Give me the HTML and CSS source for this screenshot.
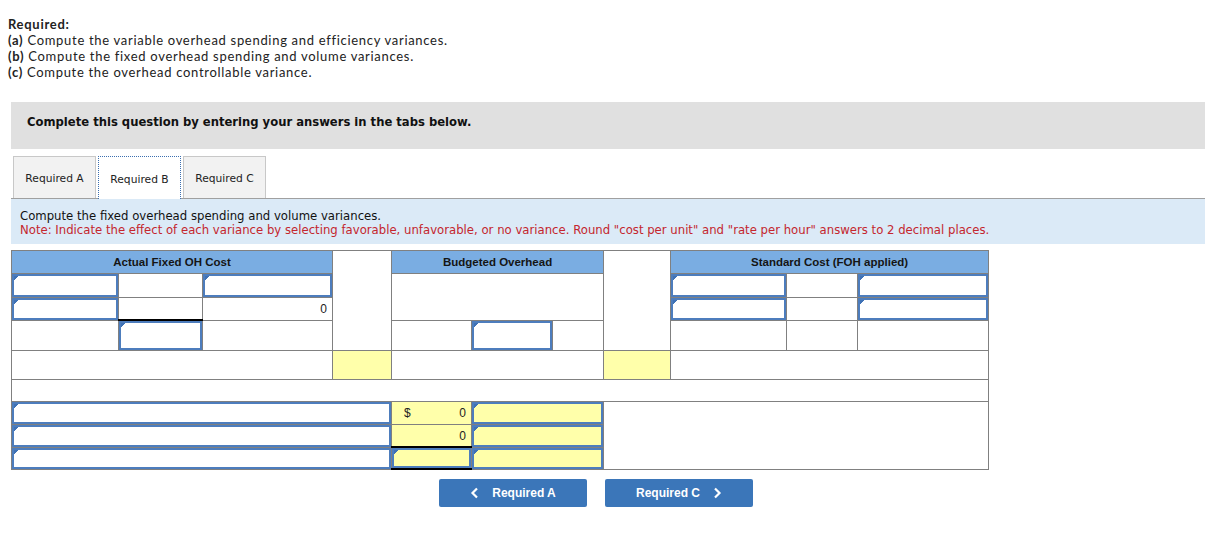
FILE: index.html
```html
<!DOCTYPE html>
<html lang="en">
<head>
    <meta charset="UTF-8">
    <title>Fixed Overhead Variances</title>
    <link rel="stylesheet" href="styles.css">
</head>
<body>
    <div class="page">
        <div class="required">
            <p class="req-title">Required:</p>
            <p><b>(a)</b> Compute the variable overhead spending and efficiency variances.</p>
            <p><b>(b)</b> Compute the fixed overhead spending and volume variances.</p>
            <p><b>(c)</b> Compute the overhead controllable variance.</p>
        </div>

        <div class="question">
            <div class="banner">Complete this question by entering your answers in the tabs below.</div>

            <div class="tabs">
                <div class="tab">Required A</div>
                <div class="tab active">Required B</div>
                <div class="tab">Required C</div>
            </div>

            <div class="instructions">
                <p>Compute the fixed overhead spending and volume variances.</p>
                <p class="note">Note: Indicate the effect of each variance by selecting favorable, unfavorable, or no variance. Round "cost per unit" and "rate per hour" answers to 2 decimal places.</p>
            </div>

            <table class="sheet">
                <colgroup>
                    <col class="w107"><col class="w84"><col class="w130"><col class="w59">
                    <col class="w80"><col class="w81"><col class="w51"><col class="w67">
                    <col class="w116"><col class="w71"><col class="w131">
                </colgroup>
                <tr class="r-head">
                    <td class="head" colspan="3">Actual Fixed OH Cost</td>
                    <td rowspan="4"></td>
                    <td class="head" colspan="3">Budgeted Overhead</td>
                    <td rowspan="4"></td>
                    <td class="head" colspan="3">Standard Cost (FOH applied)</td>
                </tr>
                <tr class="r1">
                    <td class="inp"></td><td></td><td class="inp"></td>
                    <td colspan="3" rowspan="2"></td>
                    <td class="inp"></td><td></td><td class="inp"></td>
                </tr>
                <tr class="r2">
                    <td class="inp"></td><td></td><td class="num">0</td>
                    <td class="inp"></td><td></td><td class="inp"></td>
                </tr>
                <tr class="r3">
                    <td></td><td class="inp total"></td><td></td>
                    <td></td><td class="inp"></td><td></td>
                    <td></td><td></td><td></td>
                </tr>
                <tr class="r4">
                    <td colspan="3"></td>
                    <td class="hl"></td>
                    <td colspan="3"></td>
                    <td class="hl"></td>
                    <td colspan="3"></td>
                </tr>
                <tr class="r5">
                    <td colspan="11"></td>
                </tr>
                <tr class="r6">
                    <td class="inp" colspan="4"></td>
                    <td class="hl num"><span class="cur">$</span>0</td>
                    <td class="inp hl" colspan="2"></td>
                    <td colspan="4" rowspan="3"></td>
                </tr>
                <tr class="r7">
                    <td class="inp" colspan="4"></td>
                    <td class="hl num">0</td>
                    <td class="inp hl" colspan="2"></td>
                </tr>
                <tr class="r8">
                    <td class="inp" colspan="4"></td>
                    <td class="inp hl total grand"></td>
                    <td class="inp hl" colspan="2"></td>
                </tr>
            </table>

            <div class="nav">
                <button class="nav-btn" type="button">
                    <svg width="10" height="12" viewBox="0 0 10 12"><polyline points="7,1.5 2.5,6 7,10.5" fill="none" stroke="#fff" stroke-width="2.2"/></svg>
                    <span>Required A</span>
                </button>
                <button class="nav-btn" type="button">
                    <span>Required C</span>
                    <svg width="10" height="12" viewBox="0 0 10 12"><polyline points="3,1.5 7.5,6 3,10.5" fill="none" stroke="#fff" stroke-width="2.2"/></svg>
                </button>
            </div>
        </div>
    </div>
</body>
</html>
```

FILE: styles.css
```css
/* Page */
body {
    margin: 0;
    background: #fff;
    color: #1a1a1a;
    font-family: "Open Sans", Arial, sans-serif;
}

.page {
    padding: 16px 8px 0;
}

p {
    margin: 0;
}

/* Required list */
.required {
    font-family: Lato, "Open Sans", sans-serif;
    font-size: 13px;
    letter-spacing: 0.7px;
    line-height: 16px;
    color: #222;
}

.req-title,
.required b {
    font-weight: 700;
}

/* Question area */
.question {
    margin: 22px 0 0 3px;
    width: 1194px;
}

.banner {
    height: 47px;
    box-sizing: border-box;
    display: flex;
    align-items: center;
    padding: 0 0 7px 16px;
    background: #e0e0e0;
    font-family: "DejaVu Sans", Verdana, sans-serif;
    font-size: 11.6px;
    font-weight: bold;
    color: #111;
}

/* Tabs */
.tabs {
    display: flex;
    gap: 2px;
    margin-top: 7px;
    padding-left: 2px;
    border-bottom: 1px solid #a0a0a0;
}

.tab {
    width: 81px;
    height: 39px;
    display: flex;
    align-items: center;
    justify-content: center;
    padding-top: 2px;
    background: #f2f2f2;
    border: 1px solid #c8c8c8;
    border-bottom: none;
    font-family: "DejaVu Sans", Verdana, sans-serif;
    font-size: 10.7px;
    color: #222;
}

.tab.active {
    background: #fff;
    border: 1px dotted #3b6fb0;
    border-bottom: none;
    margin-bottom: -1px;
    height: 40px;
}

/* Instructions */
.instructions {
    background: #dbeaf7;
    padding: 10px 9px 0;
    height: 35px;
    font-family: "DejaVu Sans", Verdana, sans-serif;
    font-size: 11.7px;
    line-height: 14px;
    color: #111;
}

.note {
    color: #c4262e;
}

/* Worksheet table */
.sheet {
    margin-top: 6px;
    border-collapse: collapse;
    table-layout: fixed;
    width: 978px;
    font-family: "Liberation Sans", Arial, sans-serif;
    font-size: 12px;
}

.sheet td {
    border: 1px solid #808080;
    padding: 0 6px;
    background-clip: padding-box;
}

.w107 { width: 107px; }
.w84 { width: 84px; }
.w130 { width: 130px; }
.w59 { width: 59px; }
.w80 { width: 80px; }
.w81 { width: 81px; }
.w51 { width: 51px; }
.w67 { width: 67px; }
.w116 { width: 116px; }
.w71 { width: 71px; }
.w131 { width: 131px; }

.r-head td { height: 22px; }
.r1 td { height: 23px; }
.r2 td { height: 21px; }
.r3 td { height: 29px; }
.r4 td { height: 28px; }
.r5 td { height: 21px; }
.r6 td { height: 22px; }
.r7 td { height: 21px; }
.r8 td { height: 20px; }

.sheet td.head {
    background: #7aade2;
    text-align: center;
    font-weight: bold;
    font-size: 11.5px;
    color: #151515;
}

.sheet td.hl {
    background-color: #ffffaa;
}

.sheet td.inp {
    box-shadow: inset 0 0 0 2px #4d7dbd;
    background-image: linear-gradient(135deg, #3f72b6 3px, transparent 3px);
    background-repeat: no-repeat;
    background-position: 2px 2px;
    background-size: 6px 6px;
}

.sheet td.total {
    border-top: 2px solid #000;
}

.sheet td.grand {
    border-bottom: 2px solid #000;
}

.sheet td.num {
    text-align: right;
    padding-right: 5px;
    color: #222;
}

.cur {
    float: left;
    padding-left: 6px;
}

/* Navigation buttons */
.nav {
    display: flex;
    gap: 18px;
    margin-top: 9px;
    padding-left: 428px;
}

.nav-btn {
    width: 148px;
    height: 28px;
    display: flex;
    align-items: center;
    justify-content: center;
    gap: 12px;
    background: #3b76b9;
    border: none;
    border-radius: 2px;
    color: #fff;
    font-family: "Liberation Sans", Arial, sans-serif;
    font-size: 12px;
    font-weight: bold;
    cursor: pointer;
}
```
